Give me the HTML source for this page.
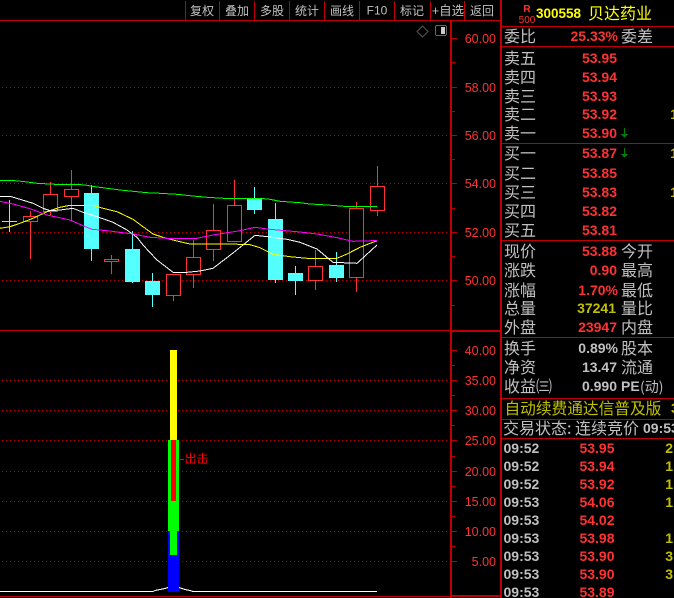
<!DOCTYPE html>
<html><head><meta charset="utf-8">
<style>
html,body{margin:0;padding:0;background:#000;width:674px;height:598px;overflow:hidden}
svg{display:block;position:absolute;left:0;top:0}
text{font-family:"Liberation Sans","WenQuanYi Zen Hei","Noto Sans CJK SC",sans-serif}
.cn{font-family:"WenQuanYi Zen Hei","Noto Sans CJK SC",sans-serif}
.t{font-size:12px;fill:#c0c0c0;text-anchor:middle}
.ax{font-size:12.5px;fill:#ff3232;text-anchor:end}
.l{font-size:16px;fill:#c0c0c0}
.p{font-size:14px;font-weight:bold;fill:#ff3232;text-anchor:end}
.g{font-size:14px;font-weight:bold;fill:#c0c0c0;text-anchor:end}
.y{font-size:14px;font-weight:bold;fill:#c0c000;text-anchor:end}
.tm{font-size:14px;font-weight:bold;fill:#c0c0c0}
.dot{stroke:#c00000;stroke-width:1;stroke-dasharray:1 3;fill:none}
.ln{fill:#c00000}
.wick{stroke:#ff3232;stroke-width:1}
.cw{stroke:#54ffff;stroke-width:1}
.rb{fill:#000;stroke:#ff3232;stroke-width:1}
.cb{fill:#54ffff}
.ma{fill:none;stroke-width:1}
</style></head><body>
<svg width="674" height="598" viewBox="0 0 674 598" xmlns="http://www.w3.org/2000/svg" shape-rendering="crispEdges">
<rect width="674" height="598" fill="#000"/>

<!-- toolbar -->
<g class="ln">
<rect x="0" y="20" width="500" height="1" fill="#c00000"/>
<rect x="185" y="1" width="1" height="19"/><rect x="219" y="1" width="1" height="19"/><rect x="254" y="1" width="1" height="19"/><rect x="289" y="1" width="1" height="19"/><rect x="324" y="1" width="1" height="19"/><rect x="359" y="1" width="1" height="19"/><rect x="394" y="1" width="1" height="19"/><rect x="430" y="1" width="1" height="19"/><rect x="464" y="1" width="1" height="19"/>
</g>
<g class="t">
<text class="t cn" x="202" y="15">复权</text>
<text class="t cn" x="237" y="15">叠加</text>
<text class="t cn" x="272" y="15">多股</text>
<text class="t cn" x="307" y="15">统计</text>
<text class="t cn" x="342" y="15">画线</text>
<text class="t" x="377" y="14.500">F10</text>
<text class="t cn" x="412" y="15">标记</text>
<text class="t" x="448" y="15" style="font-size:12.500px">+自选</text>
<text class="t cn" x="482" y="15">返回</text>
</g>

<!-- small icons -->
<path d="M422.500 26 L428 31.500 L422.500 37 L417 31.500 Z" fill="none" stroke="#555" shape-rendering="auto"/>
<rect x="435.500" y="25.500" width="11" height="10" rx="1.500" fill="none" stroke="#666"/>
<rect x="441" y="27" width="4" height="7" fill="#ccc"/>

<!-- grid upper -->
<g class="dot">
<path d="M2 87.500H448M2 135.500H448M2 183.500H448M2 232.500H448M2 280.500H448"/>
<path d="M2 380.500H448M2 410.500H448M2 440.500H448M2 471.500H448M2 501.500H448M2 531.500H448M2 561.500H448"/>
</g>

<!-- frames -->
<g class="ln">
<rect x="450" y="20" width="2" height="578"/>
<rect x="0" y="330" width="500" height="1"/>
<rect x="450" y="330" width="50" height="2"/>
<rect x="0" y="596" width="500" height="1"/>
<rect x="500" y="0" width="2" height="598"/>
<rect x="450" y="595" width="50" height="2"/>
<!-- ticks upper -->
<rect x="452" y="38" width="5" height="1"/><rect x="452" y="87" width="5" height="1"/><rect x="452" y="135" width="5" height="1"/><rect x="452" y="183" width="5" height="1"/><rect x="452" y="232" width="5" height="1"/><rect x="452" y="280" width="5" height="1"/>
<rect x="452" y="62" width="3" height="1"/><rect x="452" y="111" width="3" height="1"/><rect x="452" y="159" width="3" height="1"/><rect x="452" y="208" width="3" height="1"/><rect x="452" y="256" width="3" height="1"/><rect x="452" y="305" width="3" height="1"/>
<!-- ticks lower -->
<rect x="452" y="350" width="5" height="1"/><rect x="452" y="380" width="5" height="1"/><rect x="452" y="410" width="5" height="1"/><rect x="452" y="440" width="5" height="1"/><rect x="452" y="471" width="5" height="1"/><rect x="452" y="501" width="5" height="1"/><rect x="452" y="531" width="5" height="1"/><rect x="452" y="561" width="5" height="1"/>
<rect x="452" y="365" width="3" height="1"/><rect x="452" y="395" width="3" height="1"/><rect x="452" y="425" width="3" height="1"/><rect x="452" y="456" width="3" height="1"/><rect x="452" y="486" width="3" height="1"/><rect x="452" y="516" width="3" height="1"/><rect x="452" y="546" width="3" height="1"/>
</g>

<!-- axis labels -->
<text class="ax" x="496" y="43">60.00</text>
<text class="ax" x="496" y="92">58.00</text>
<text class="ax" x="496" y="140">56.00</text>
<text class="ax" x="496" y="188">54.00</text>
<text class="ax" x="496" y="237">52.00</text>
<text class="ax" x="496" y="285">50.00</text>
<text class="ax" x="496" y="355">40.00</text>
<text class="ax" x="496" y="385">35.00</text>
<text class="ax" x="496" y="415">30.00</text>
<text class="ax" x="496" y="445">25.00</text>
<text class="ax" x="496" y="476">20.00</text>
<text class="ax" x="496" y="506">15.00</text>
<text class="ax" x="496" y="536">10.00</text>
<text class="ax" x="496" y="566">5.00</text>

<!-- candles -->
<path class="cw" d="M9.500 200V232M91.500 185V261M132.500 231V283M152.500 273V307M254.500 187V214M275.500 203V283M295.500 266V295M336.500 252V282"/>
<path class="wick" d="M30.500 211V259M50.500 182V215M71.500 170V220M111.500 255V274M173.500 295V301M193.500 240V288M213.500 204V261M234.500 180V206M315.500 250V290M356.500 202V292M377.500 166V216"/>
<rect class="cb" x="2" y="221" width="15" height="1"/>
<rect class="rb" x="23.500" y="216.500" width="14" height="5"/>
<rect class="rb" x="43.500" y="194.500" width="14" height="17"/>
<rect class="rb" x="64.500" y="189.500" width="14" height="7"/>
<rect class="cb" x="84" y="193" width="15" height="56"/>
<rect class="rb" x="104.500" y="259.500" width="14" height="2"/>
<rect class="cb" x="125" y="249" width="15" height="33"/>
<rect class="cb" x="145" y="281" width="15" height="14"/>
<rect class="rb" x="166.500" y="274.500" width="14" height="21"/>
<rect class="rb" x="186.500" y="257.500" width="14" height="17"/>
<rect class="rb" x="206.500" y="230.500" width="14" height="19"/>
<rect class="rb" x="227.500" y="205.500" width="14" height="36"/>
<rect class="cb" x="247" y="198" width="15" height="12"/>
<rect class="cb" x="268" y="219" width="15" height="61"/>
<rect class="cb" x="288" y="273" width="15" height="8"/>
<rect class="rb" x="308.500" y="266.500" width="14" height="14"/>
<rect class="cb" x="329" y="265" width="15" height="13"/>
<rect class="rb" x="349.500" y="208.500" width="14" height="69"/>
<rect class="rb" x="370.500" y="186.500" width="14" height="24"/>

<!-- moving averages -->
<g>
<polyline class="ma" stroke="#00ff00" points="0,180.700 15,180.700 25,181.700 37,183.300 55,184.300 77,184.300 87,185.300 97,187 107,188.300 120,190 133,191.300 147,192.700 160,193.300 177,194.300 193,196 207,197.300 224,198.300 260,198.300 270,199.300 280,201.300 300,202.700 310,204 327,205 347,206.500 377,206.700"/>
<polyline class="ma" stroke="#ffff00" points="0,228.300 10,226.700 20,223.300 33,218.300 47,211.700 60,207.300 70,205.300 93,205.300 103,208.300 117,211.700 133,219.300 143,226.700 153,234 163,237.300 177,241 190,244 223,244 240,244.300 250,244.700 260,247.700 273,254.300 290,256.700 307,258.300 337,258.300 347,254 360,247.300 377,240.700"/>
<polyline class="ma" stroke="#ffffff" points="0,196.300 10,196.300 20,199.300 33,203.300 43,208.300 50,210.700 60,210 73,208.300 83,212.300 100,217.700 113,222.300 127,230 137,237.300 143,245 157,260 173,272.300 183,272.700 200,271 213,268.300 233,253 243,245 255,235.300 270,237 287,239.300 300,242.300 317,249 333,262.300 357,263.300 377,245"/>
<polyline class="ma" stroke="#ff00ff" points="0,201.300 13,204 30,208.700 47,215 70,220 83,225.700 92,229.300 107,230.700 133,234 150,237.300 173,238.700 197,238.300 213,235 240,230.700 255,227.300 270,229.300 300,232 317,234 337,237.700 353,241.300 367,241 377,240.300"/>
</g>

<!-- lower indicator -->
<polyline fill="none" stroke="#fff" points="0,591.500 153,591.500 155,590.500 160,589.500 165,588.500 168,587.500 179,587.500 185,589.500 190,590.500 193,591.500 377,591.500"/>
<rect x="170" y="350" width="7" height="90" fill="#ffff00"/>
<rect x="168" y="440" width="11" height="91" fill="#00ff00"/>
<rect x="171" y="440" width="5" height="61" fill="#ff0000"/>
<rect x="168" y="531" width="11" height="61" fill="#0000ff"/>
<rect x="170" y="531" width="7" height="24" fill="#00ff00"/>
<rect x="180" y="459" width="4" height="1" fill="#ff0000"/>
<text class="cn" x="184.500" y="463" font-size="12" fill="#ff0000">出击</text>

<!-- right panel lines -->
<g class="ln">
<rect x="502" y="26" width="172" height="1"/>
<rect x="502" y="46" width="172" height="1"/>
<rect x="502" y="143" width="172" height="1"/>
<rect x="502" y="240" width="172" height="1"/>
<rect x="502" y="337" width="172" height="1"/>
<rect x="502" y="398" width="172" height="1"/>
<rect x="502" y="419" width="172" height="1"/>
<rect x="502" y="438" width="172" height="1"/>
</g>

<!-- header -->
<text x="527" y="12" font-size="10" font-weight="bold" fill="#ff3232" text-anchor="middle">R</text>
<text x="527" y="23" font-size="10" fill="#ff3232" text-anchor="middle">500</text>
<text x="536" y="18" font-size="13.500" font-weight="bold" fill="#ffff00">300558</text>
<text class="cn" x="588" y="19" font-size="16" fill="#ffff00">贝达药业</text>

<text class="l cn" x="504" y="42">委比</text>
<text class="p" x="618" y="41">25.33%</text>
<text class="l cn" x="621" y="42">委差</text>

<text class="l cn" x="504" y="64">卖五</text><text class="p" x="617" y="63">53.95</text>
<text class="l cn" x="504" y="83">卖四</text><text class="p" x="617" y="82">53.94</text>
<text class="l cn" x="504" y="102">卖三</text><text class="p" x="617" y="101">53.93</text>
<text class="l cn" x="504" y="120">卖二</text><text class="p" x="617" y="119">53.92</text>
<text class="l cn" x="504" y="139">卖一</text><text class="p" x="617" y="138">53.90</text>
<text class="y" x="678" y="119">1</text>

<path d="M624 128h1v6h3l-3.500 4l-3.500-4h3z" fill="#008000"/>
<path d="M624 148h1v6h3l-3.500 4l-3.500-4h3z" fill="#008000"/>

<text class="l cn" x="504" y="159">买一</text><text class="p" x="617" y="158">53.87</text>
<text class="l cn" x="504" y="179">买二</text><text class="p" x="617" y="178">53.85</text>
<text class="l cn" x="504" y="198">买三</text><text class="p" x="617" y="197">53.83</text>
<text class="l cn" x="504" y="217">买四</text><text class="p" x="617" y="216">53.82</text>
<text class="l cn" x="504" y="236">买五</text><text class="p" x="617" y="235">53.81</text>
<text class="y" x="678" y="158">1</text>
<text class="y" x="678" y="197">1</text>

<text class="l cn" x="504" y="257">现价</text><text class="p" x="617" y="256">53.88</text><text class="l cn" x="621" y="257">今开</text>
<text class="l cn" x="504" y="276">涨跌</text><text class="p" x="617" y="275">0.90</text><text class="l cn" x="621" y="276">最高</text>
<text class="l cn" x="504" y="296">涨幅</text><text class="p" x="618" y="295">1.70%</text><text class="l cn" x="621" y="296">最低</text>
<text class="l cn" x="504" y="314">总量</text><text class="y" x="616" y="313">37241</text><text class="l cn" x="621" y="314">量比</text>
<text class="l cn" x="504" y="333">外盘</text><text class="p" x="617" y="332">23947</text><text class="l cn" x="621" y="333">内盘</text>

<text class="l cn" x="504" y="354">换手</text><text class="g" x="618" y="353">0.89%</text><text class="l cn" x="621" y="354">股本</text>
<text class="l cn" x="504" y="373">净资</text><text class="g" x="617" y="372">13.47</text><text class="l cn" x="621" y="373">流通</text>
<text class="l cn" x="504" y="392">收益㈢</text><text class="g" x="617" y="391">0.990</text><text x="621" y="391" font-size="14" font-weight="bold" fill="#c0c0c0">PE</text><text class="cn" x="640" y="392" font-size="14" fill="#c0c0c0">(动)</text>

<text class="cn" x="504.500" y="414" font-size="15.700" fill="#c0c000">自动续费通达信普及版</text>
<text x="671" y="413" font-size="14" font-weight="bold" fill="#c0c000">3</text>
<text class="l cn" x="503" y="434">交易状态:</text>
<text class="l cn" x="575" y="434">连续竞价</text>
<text class="tm" x="643" y="433">09:53</text>

<!-- trades -->
<text class="tm" x="503.500" y="453">09:52</text><text class="p" x="614.500" y="453">53.95</text><text class="y" x="673" y="453">2</text>
<text class="tm" x="503.500" y="471">09:52</text><text class="p" x="614.500" y="471">53.94</text><text class="y" x="673" y="471">1</text>
<text class="tm" x="503.500" y="489">09:52</text><text class="p" x="614.500" y="489">53.92</text><text class="y" x="673" y="489">1</text>
<text class="tm" x="503.500" y="507">09:53</text><text class="p" x="614.500" y="507">54.06</text><text class="y" x="673" y="507">1</text>
<text class="tm" x="503.500" y="525">09:53</text><text class="p" x="614.500" y="525">54.02</text>
<text class="tm" x="503.500" y="543">09:53</text><text class="p" x="614.500" y="543">53.98</text><text class="y" x="673" y="543">1</text>
<text class="tm" x="503.500" y="561">09:53</text><text class="p" x="614.500" y="561">53.90</text><text class="y" x="673" y="561">3</text>
<text class="tm" x="503.500" y="579">09:53</text><text class="p" x="614.500" y="579">53.90</text><text class="y" x="673" y="579">3</text>
<text class="tm" x="503.500" y="597">09:53</text><text class="p" x="614.500" y="597">53.89</text>
</svg>
</body></html>
